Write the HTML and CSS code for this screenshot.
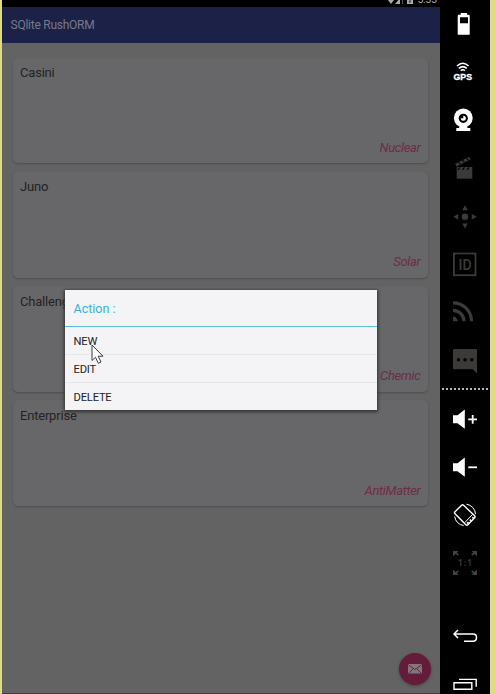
FILE: index.html
```html
<!DOCTYPE html>
<html lang="en">
<head>
<meta charset="utf-8">
<title>SQlite RushORM</title>
<link rel="stylesheet" href="styles.css">
</head>
<body>
<div class="window">
  <main class="device">
    <div class="status">
      <svg class="status-icons" width="30" height="7" viewBox="0 0 30 7"><path d="M1 0h6L4 4z M8 4L13 -2V4z M20 -2h6v6h-6z" fill="#aaa"/><path d="M15.500 0v4" stroke="#555"/><path d="M23.500 0l-1.500 2h2" stroke="#333" fill="none"/></svg>
      <span class="clock">5:55</span>
    </div>
    <header class="appbar">SQlite RushORM</header>
    <section class="cards">
      <article class="card"><h2>Casini</h2><p>Nuclear</p></article>
      <article class="card"><h2>Juno</h2><p>Solar</p></article>
      <article class="card"><h2>Challenger</h2><p>Chemic</p></article>
      <article class="card"><h2>Enterprise</h2><p>AntiMatter</p></article>
    </section>
    <div class="fab">
      <svg width="14" height="10" viewBox="0 0 14 10"><rect width="14" height="9.500" rx="1" fill="#82767b"/><path d="M.5 1L7 5.500 13.500 1M1 9l4-4M13 9L9 5" fill="none" stroke="#651c3a" stroke-width=".9"/></svg>
    </div>
    <div class="dialog">
      <div class="dialog-title">Action :</div>
      <div class="option">NEW</div>
      <div class="option">EDIT</div>
      <div class="option">DELETE</div>
    </div>
    <svg class="cursor" width="14" height="22" viewBox="0 0 14 22"><path d="M1 1V16.500L4.500 13.300 7.300 19.300 10 18 7.200 12.200H12z" fill="#fff" stroke="#3c3c46" stroke-width="1"/></svg>
  </main>
  <aside class="tools">
    <svg class="tool" viewBox="0 0 50 48"><path fill-rule="evenodd" d="M20.700 13H27v1.700h1.700q1 0 1 1v19h-12v-19q0-1 1-1h2zM20 17.300v6h8v-6z"/></svg>
    <svg class="tool" viewBox="0 0 50 48"><g class="line" stroke-width="1.500"><path d="M17 18q5.800-5.500 11.600 0M18.800 20.400q4-3.500 8 0M20.700 22.700q2.100-1.700 4.200 0"/></g><text class="gps" x="22.800" y="32" textLength="18.500" lengthAdjust="spacingAndGlyphs">GPS</text></svg>
    <svg class="tool" viewBox="0 0 50 48"><circle cx="23.300" cy="22" r="9.400"/><path d="M20 29.500h6.600l1 2.500h2.700v3h-14v-3h2.700z"/><circle cx="23.300" cy="22.300" r="4.600" fill="#000"/><circle cx="23.300" cy="22.300" r="2.500"/><path d="M23.300 22.300V19.500h-3v2.800z" fill="#000"/></svg>
    <svg class="tool dim" viewBox="0 0 50 48"><path d="M16.700 23h15.600v11.700H16.700z"/><path d="M15.300 19.800L29.300 12.700l1.200 2.700-14 7.200z"/><path d="M18 25.800l2-2.500M22.500 25.800l2-2.500M27 25.800l2-2.500M18.500 18l2 2.300M22.500 16l2 2.300M26.500 14l2 2.300" stroke="#000" stroke-width="1.100"/></svg>
    <svg class="tool dim" viewBox="0 0 50 48"><circle cx="25" cy="24.700" r="3.200"/><path d="M25 13.300l2.800 4.900h-5.600zM25 36.500l2.800-4.900h-5.600zM13.300 24.700l4.900-2.800v5.600zM36.700 24.700l-4.900-2.800v5.600z"/></svg>
    <svg class="tool dim" viewBox="0 0 50 48"><rect class="line" x="13.900" y="13.500" width="21.600" height="21.700" stroke-width="1.800"/><text class="id" x="25" y="30" textLength="13" lengthAdjust="spacingAndGlyphs">ID</text></svg>
    <svg class="tool dim" viewBox="0 0 50 48"><path d="M13 28.500a4.800 4.800 0 0 1 4.800 4.800H13z"/><g class="line" stroke-width="3.200"><path d="M13 22.300a11 11 0 0 1 11 11M13 14.800a18.500 18.500 0 0 1 18.500 18.500"/></g></svg>
    <svg class="tool dim" viewBox="0 0 50 48"><path d="M14 13h22q1 0 1 1v23.500l-4-4.200H14q-1 0-1-1V14q0-1 1-1z"/><g fill="#000"><circle cx="18.500" cy="23.700" r="1.700"/><circle cx="25" cy="23.700" r="1.700"/><circle cx="31.800" cy="23.700" r="1.700"/></g></svg>
    <div class="divider"></div>
    <svg class="tool" viewBox="0 0 50 48"><path d="M13 20.200h4.500l7.300-5.700v19.300l-7.300-5.600H13z"/><path class="line" stroke-width="1.800" d="M28.300 24.300H37M32.700 20v8.700"/></svg>
    <svg class="tool" viewBox="0 0 50 48"><path d="M13 20.200h4.500l7.300-5.700v19.300l-7.300-5.600H13z"/><path class="line" stroke-width="1.800" d="M28.300 24.300H37"/></svg>
    <svg class="tool" viewBox="0 0 50 48"><g class="line" stroke-width="1.400" stroke-linejoin="round"><path d="M21.600 14.300q1-1 2 0l11 10.500q1 1 0 2l-6.700 7q-1 1-2 0L15 22.800q-1-1 0-2z"/><path d="M24.800 31.500l7.700-8" stroke-width="1"/><path d="M27 32.500l1.500-1.500M29.800 29.800l1.200-1.200M32.300 27.300l1.200-1.200" stroke-width="1.500"/><path d="M26.500 13.200a10.500 10.500 0 0 1 9 10M14.700 25.500a10 10 0 0 0 9 9" stroke-width="1"/></g></svg>
    <svg class="tool dark" viewBox="0 0 50 48"><path d="M13 12h5.500l-1.700 1.600 2 2-1.200 1.200-2-2-1.600 1.900H13zM37 12h-5.500l1.700 1.600-2 2 1.200 1.200 2-2 1.600 1.900H37zM13 36h5.500l-1.700-1.600 2-2-1.200-1.200-2 2-1.600-1.900H13zM37 36h-5.500l1.700-1.600-2-2 1.200-1.200 2 2 1.600-1.900H37z"/><text class="ratio" x="25" y="27" textLength="14">1:1</text></svg>
    <svg class="tool nav" viewBox="0 0 50 48"><path class="line" stroke-width="1.500" d="M18 17l-4 4 4 4M14 21h19q3.500 0 3.500 3.600t-3.500 3.700h-9"/></svg>
    <svg class="tool" viewBox="0 0 50 48"><path class="line" stroke-width="1.400" d="M14 21.700h17.800v6.600H14zM19 18.400h17.200v7.300"/></svg>
  </aside>
</div>
</body>
</html>
```
FILE: styles.css
```css
* { box-sizing: border-box; }
body { margin: 0; overflow: hidden; background: #dfdb84; font-family: Roboto, sans-serif; }
.window { display: flex; height: 694px; padding: 0 6px 0 1.5px; overflow: hidden; }
.device { position: relative; width: 438.500px; background: #636363; border-bottom: 1px solid #443e42; }
.status { display: flex; justify-content: flex-end; height: 7px; padding-right: 3px; background: #000; color: #aaa; }
.status-icons { margin-right: 1px; }
.clock { font-size: 10.500px; line-height: 12px; margin-top: -6px; width: 19px; white-space: nowrap; letter-spacing: -.3px; }
.appbar { height: 36px; padding-left: 9px; background: #1c2148; color: #77798a; font-size: 12px; letter-spacing: -.25px; line-height: 37px; }
.cards { display: flex; flex-direction: column; gap: 8.500px; padding: 14.500px 12px 0 11.500px; }
.card { display: flex; flex-direction: column; justify-content: space-between; height: 105.800px; padding: 6.500px 7px 7.500px 7px; border-radius: 5px; background: #676769; box-shadow: 0 1px 2px #4d4d51; }
.card h2 { margin: 0; color: #232325; font-size: 13px; letter-spacing: -.2px; font-weight: 400; line-height: 17px; }
.card p { margin: 0; color: #702b47; font-size: 13px; letter-spacing: -.35px; font-style: italic; line-height: 17px; text-align: right; }
.fab { position: absolute; left: 397.500px; top: 652.500px; display: flex; align-items: center; justify-content: center; width: 32px; height: 32px; border-radius: 50%; background: #651c3a; box-shadow: 0 1px 3px #444; }
.dialog { position: absolute; left: 63px; top: 290px; width: 312.500px; height: 120px; background: #f4f4f6; box-shadow: 0 1px 3px 1px #333; }
.dialog-title { height: 37px; padding-left: 9px; border-bottom: 1px solid #5bbfe3; color: #3fb2da; font-size: 12.500px; line-height: 38px; }
.option { height: 28px; padding-left: 9px; border-bottom: 1px solid #e6e6e8; color: #242426; font-size: 11.200px; letter-spacing: -.2px; line-height: 30px; }
.option:last-child { height: 27px; border-bottom: 0; }
.cursor { position: absolute; left: 89px; top: 344px; }
.tools { display: flex; flex-direction: column; width: 50.500px; flex: none; background: #000; }
.tool { flex: none; width: 50px; height: 48px; fill: #fff; stroke: none; color: #fff; }
.dim { fill: #3b3a38; color: #3b3a38; }
.dark { fill: #41403f; color: #41403f; }
.line { fill: none; stroke: currentColor; }
.tool text { text-anchor: middle; }
.gps { font: 900 8.800px "Liberation Sans", sans-serif; stroke: #fff; stroke-width: .3px; }
.id { font: 500 15px Roboto, sans-serif; }
.ratio { font: 500 8.500px Roboto, sans-serif; }
.divider { flex: none; height: 2px; margin: 4px 2px 5px; background: repeating-linear-gradient(90deg, #bbb 0 2px, #000 2px 4px); }
.nav { margin-top: 26px; }
```
